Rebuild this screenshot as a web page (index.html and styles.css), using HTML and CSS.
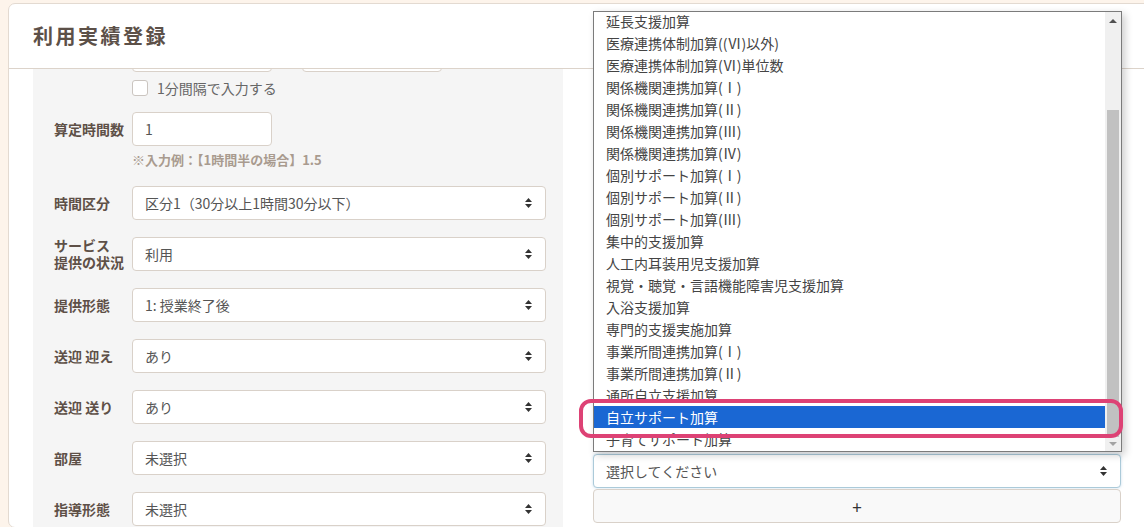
FILE: index.html
```html
<!DOCTYPE html>
<html lang="ja">
<head>
    <meta charset="UTF-8">
    <meta name="viewport" content="width=device-width, initial-scale=1.0">
    <title>利用実績登録</title>
    <link rel="stylesheet" href="styles.css">
</head>
<body>
    <div class="modal">
        <div class="modal-header">
            <h1>利用実績登録</h1>
        </div>
        <div class="modal-body">
            <div class="panel">
                <div class="panel-inner">
                    <div class="row row-time">
                        <span class="label"></span>
                        <div class="times">
                            <input class="control short" type="text" value="">
                            <span class="tilde"></span>
                            <input class="control short" type="text" value="">
                        </div>
                    </div>
                    <div class="row row-check">
                        <span class="label"></span>
                        <label class="check"><span class="box"></span>1分間隔で入力する</label>
                    </div>
                    <div class="row row-hours">
                        <span class="label">算定時間数</span>
                        <div class="field">
                            <input class="control short" type="text" value="1">
                            <div class="hint">※入力例：【1時間半の場合】1.5</div>
                        </div>
                    </div>
                    <div class="row">
                        <span class="label">時間区分</span>
                        <select class="control">
                            <option>区分1（30分以上1時間30分以下）</option>
                            <option>区分2（1時間30分超）</option>
                        </select>
                    </div>
                    <div class="row">
                        <span class="label two-line">サービス<br>提供の状況</span>
                        <select class="control">
                            <option>利用</option>
                            <option>欠席</option>
                        </select>
                    </div>
                    <div class="row">
                        <span class="label">提供形態</span>
                        <select class="control">
                            <option>1: 授業終了後</option>
                            <option>2: 休業日</option>
                        </select>
                    </div>
                    <div class="row">
                        <span class="label">送迎 迎え</span>
                        <select class="control">
                            <option>あり</option>
                            <option>なし</option>
                        </select>
                    </div>
                    <div class="row">
                        <span class="label">送迎 送り</span>
                        <select class="control">
                            <option>あり</option>
                            <option>なし</option>
                        </select>
                    </div>
                    <div class="row">
                        <span class="label">部屋</span>
                        <select class="control">
                            <option>未選択</option>
                        </select>
                    </div>
                    <div class="row">
                        <span class="label">指導形態</span>
                        <select class="control">
                            <option>未選択</option>
                        </select>
                    </div>
                </div>
            </div>
            <div class="side">
                <div class="add-group">
                    <div class="popup">
                        <ul class="options">
                            <li>延長支援加算</li>
                            <li>医療連携体制加算((Ⅵ)以外)</li>
                            <li>医療連携体制加算(Ⅵ)単位数</li>
                            <li>関係機関連携加算(Ⅰ)</li>
                            <li>関係機関連携加算(Ⅱ)</li>
                            <li>関係機関連携加算(Ⅲ)</li>
                            <li>関係機関連携加算(Ⅳ)</li>
                            <li>個別サポート加算(Ⅰ)</li>
                            <li>個別サポート加算(Ⅱ)</li>
                            <li>個別サポート加算(Ⅲ)</li>
                            <li>集中的支援加算</li>
                            <li>人工内耳装用児支援加算</li>
                            <li>視覚・聴覚・言語機能障害児支援加算</li>
                            <li>入浴支援加算</li>
                            <li>専門的支援実施加算</li>
                            <li>事業所間連携加算(Ⅰ)</li>
                            <li>事業所間連携加算(Ⅱ)</li>
                            <li>通所自立支援加算</li>
                            <li class="selected">自立サポート加算</li>
                            <li>子育てサポート加算</li>
                        </ul>
                        <div class="scrollbar">
                            <div class="sb-arrow up"><span></span></div>
                            <div class="sb-thumb"></div>
                            <div class="sb-arrow down"><span></span></div>
                        </div>
                    </div>
                    <div class="mark"></div>
                    <select class="control focused">
                        <option>選択してください</option>
                    </select>
                    <button class="add-btn" type="button">+</button>
                </div>
            </div>
        </div>
    </div>
</body>
</html>
```

FILE: styles.css
```css
html, body {
    margin: 0;
    height: 100%;
    overflow: hidden;
}
body {
    background-color: #fdf4eb;
    font-family: "Noto Sans CJK JP", sans-serif;
    font-size: 14px;
    color: #555;
}
.modal {
    margin: 3px 0 0 8px;
    width: 1200px;
    background: #fff;
    border: 1px solid #e3dad1;
    border-radius: 7px;
}
.modal-header {
    height: 64px;
    display: flex;
    align-items: center;
    padding-left: 24px;
    border-bottom: 1px solid #dcd3ca;
}
.modal-header h1 {
    margin: 0;
    font-size: 20px;
    line-height: 1;
    letter-spacing: 2.5px;
    color: #5c5048;
}
.modal-body {
    display: flex;
    gap: 30px;
    padding-left: 24px;
    height: 458px;
}
.panel {
    width: 530px;
    flex-shrink: 0;
    background: #f5f5f5;
    overflow: hidden;
}
.panel-inner {
    margin-top: -31px;
    padding: 0 17px 0 21px;
}
.row {
    display: flex;
    align-items: center;
    margin-bottom: 17px;
}
.row-time {
    margin-bottom: 6px;
}
.row-check {
    height: 20px;
    margin-bottom: 14px;
}
.row-hours {
    align-items: flex-start;
}
.label {
    width: 78px;
    min-height: 34px;
    flex-shrink: 0;
    display: flex;
    align-items: center;
    font-weight: bold;
    line-height: 16px;
    color: #5e5047;
}
.label.two-line {
    line-height: 17px;
}
.row-check .label {
    min-height: 0;
}
.field {
    flex: 1;
}
.control {
    display: block;
    width: 100%;
    height: 34px;
    box-sizing: border-box;
    padding: 0 12px;
    border: 1px solid #d9d1c9;
    border-radius: 4px;
    background: #fff;
    font-family: inherit;
    font-size: 14px;
    color: #555;
    outline: none;
}
select.control {
    appearance: none;
    -webkit-appearance: none;
    background: #fff url("data:image/svg+xml,%3Csvg xmlns='http://www.w3.org/2000/svg' width='7' height='10' viewBox='0 0 7 10'%3E%3Cpath d='M3.5 0L7 4H0z M3.5 10L0 6h7z' fill='%23333'/%3E%3C/svg%3E") no-repeat right 13px center;
}
.short {
    width: 140px;
}
.times {
    display: flex;
    align-items: center;
}
.tilde {
    width: 30px;
}
.check {
    display: flex;
    align-items: center;
    gap: 9px;
    line-height: 20px;
    color: #666;
}
.box {
    width: 16px;
    height: 16px;
    box-sizing: border-box;
    border: 1px solid #cbc5c0;
    border-radius: 3px;
    background: #fff;
}
.hint {
    margin-top: 5px;
    font-size: 13px;
    line-height: 18px;
    font-weight: bold;
    color: #a99b8f;
}
.side {
    width: 528px;
    height: 100%;
    box-sizing: border-box;
    padding-bottom: 4px;
    display: flex;
    flex-direction: column;
    justify-content: flex-end;
}
.add-group {
    position: relative;
    display: flex;
    flex-direction: column;
    gap: 1px;
}
.control.focused {
    border-color: #abcad9;
    box-shadow: 0 0 3px rgba(102, 160, 200, 0.35);
}
.add-btn {
    height: 34px;
    border: 1px solid #d9d1c9;
    border-radius: 4px;
    background: #f9f9f9;
    font-family: inherit;
    font-size: 17px;
    color: #333;
    padding: 0;
}
.popup {
    position: absolute;
    left: 0;
    right: -1px;
    bottom: calc(100% + 2px);
    height: 441px;
    box-sizing: border-box;
    display: flex;
    border: 1px solid #7b7b7b;
    background: #fff;
    box-shadow: 3px 3px 8px rgba(0, 0, 0, 0.2);
    overflow: hidden;
    z-index: 5;
}
.options {
    flex: 1;
    list-style: none;
    margin: -2px 0 0;
    padding: 0;
}
.options li {
    height: 22px;
    line-height: 22px;
    padding-left: 12px;
    white-space: nowrap;
    color: #444;
}
.options li.selected {
    background: #1a67d3;
    color: #fff;
}
.scrollbar {
    width: 16px;
    flex-shrink: 0;
    display: flex;
    flex-direction: column;
    align-items: center;
    background: #f0f0f0;
}
.sb-arrow {
    height: 17px;
    display: flex;
    align-items: center;
    justify-content: center;
}
.sb-arrow span {
    width: 0;
    height: 0;
    border-left: 4px solid transparent;
    border-right: 4px solid transparent;
}
.sb-arrow.up span {
    border-bottom: 4px solid #505050;
}
.sb-arrow.down {
    margin-top: auto;
    height: 14px;
}
.sb-arrow.down span {
    border-top: 4px solid #a3a3a3;
}
.sb-thumb {
    width: 12px;
    height: 327px;
    margin-top: 81px;
    background: #c1c1c1;
}
.mark {
    position: absolute;
    left: -14px;
    right: -2px;
    top: -55px;
    height: 39px;
    box-sizing: border-box;
    border: 4px solid #dd4275;
    border-radius: 12px;
    z-index: 6;
    pointer-events: none;
}
```
